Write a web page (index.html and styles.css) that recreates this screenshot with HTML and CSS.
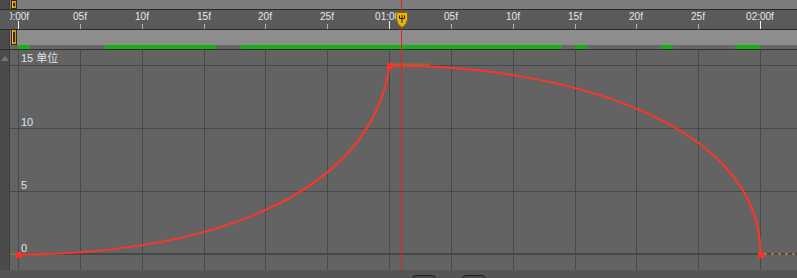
FILE: index.html
```html
<!DOCTYPE html>
<html lang="en">
<head>
    <meta charset="UTF-8">
    <title>Graph Editor</title>
    <link rel="stylesheet" href="styles.css">
</head>
<body>

<div class="panel">
    <div class="row nav">
        <div class="side"></div>
        <div class="main"><span class="handle small"></span></div>
    </div>

    <div class="row ruler">
        <div class="side"></div>
        <div class="main">
            <svg width="787" height="19">
                <g class="tick-labels">
                    <text x="8" y="10">0:00f</text>
                    <text x="70" y="10">05f</text>
                    <text x="132" y="10">10f</text>
                    <text x="194" y="10">15f</text>
                    <text x="255" y="10">20f</text>
                    <text x="317" y="10">25f</text>
                    <text x="379" y="10">01:00f</text>
                    <text x="441" y="10">05f</text>
                    <text x="503" y="10">10f</text>
                    <text x="565" y="10">15f</text>
                    <text x="626" y="10">20f</text>
                    <text x="688" y="10">25f</text>
                    <text x="750" y="10">02:00f</text>
                </g>
                <g class="minor">
                    <rect x="70" y="14" width="1" height="5"/>
                    <rect x="132" y="14" width="1" height="5"/>
                    <rect x="194" y="14" width="1" height="5"/>
                    <rect x="255" y="14" width="1" height="5"/>
                    <rect x="317" y="14" width="1" height="5"/>
                    <rect x="441" y="14" width="1" height="5"/>
                    <rect x="503" y="14" width="1" height="5"/>
                    <rect x="565" y="14" width="1" height="5"/>
                    <rect x="626" y="14" width="1" height="5"/>
                    <rect x="688" y="14" width="1" height="5"/>
                </g>
                <g class="major">
                    <rect x="8" y="11" width="1" height="8"/>
                    <rect x="379" y="11" width="1" height="8"/>
                    <rect x="750" y="11" width="1" height="8"/>
                </g>
            </svg>
        </div>
    </div>

    <div class="row work">
        <div class="side"></div>
        <div class="main"><span class="handle tall"></span></div>
    </div>

    <div class="row cache">
        <div class="side"></div>
        <div class="main">
            <svg width="787" height="4">
                <g class="green">
                    <rect x="8" y="0" width="12" height="4"/>
                    <rect x="95" y="0" width="111" height="4"/>
                    <rect x="231" y="0" width="321" height="4"/>
                    <rect x="565" y="0" width="12" height="4"/>
                    <rect x="651" y="0" width="12" height="4"/>
                    <rect x="725" y="0" width="25" height="4"/>
                </g>
            </svg>
        </div>
    </div>

    <div class="row graph">
        <div class="side">
            <svg width="9" height="14"><polygon class="tri" points="1,11 5,6 9,11"/></svg>
        </div>
        <div class="main">
            <svg width="787" height="220">
                <g class="grid">
                    <rect x="8" y="0" width="1" height="220"/>
                    <rect x="70" y="0" width="1" height="220"/>
                    <rect x="132" y="0" width="1" height="220"/>
                    <rect x="194" y="0" width="1" height="220"/>
                    <rect x="255" y="0" width="1" height="220"/>
                    <rect x="317" y="0" width="1" height="220"/>
                    <rect x="379" y="0" width="1" height="220"/>
                    <rect x="441" y="0" width="1" height="220"/>
                    <rect x="503" y="0" width="1" height="220"/>
                    <rect x="565" y="0" width="1" height="220"/>
                    <rect x="626" y="0" width="1" height="220"/>
                    <rect x="688" y="0" width="1" height="220"/>
                    <rect x="750" y="0" width="1" height="220"/>
                    <rect x="0" y="15" width="787" height="1"/>
                    <rect x="0" y="78" width="787" height="1"/>
                    <rect x="0" y="141" width="787" height="1"/>
                </g>
                <rect class="zero" x="0" y="203" width="787" height="2"/>

                <g class="value-labels">
                    <text x="11" y="12">15 单位</text>
                    <text x="11" y="76">10</text>
                    <text x="11" y="139">5</text>
                    <text x="11" y="202">0</text>
                </g>

                <path class="speed" d="M0,204 H6 M382,14.5 H420"/>
                <path class="after" d="M754,204 H787"/>
                <path class="curve" d="M8.5,204.5 C190,204.5 360,150 379.5,15.5 C550,15.5 750.5,70 750.5,204.5"/>

                <rect class="key" x="6" y="202" width="6" height="6"/>
                <rect class="key" x="377" y="13" width="6" height="6"/>
                <rect class="key" x="748" y="202" width="6" height="6"/>
            </svg>
        </div>
    </div>

    <div class="footer">
        <span class="btn"></span>
        <span class="btn"></span>
    </div>

    <div class="playhead"></div>
    <svg class="cti" width="12" height="16">
        <path class="cti-body" d="M0.5,0.5 H11.5 V7 Q11.5,12 6,15.5 Q0.5,12 0.5,7 Z"/>
        <path class="cti-mark" d="M6,5 V11 M3.5,3.5 V6.5 H8.5 V3.5 M6,3 V5"/>
    </svg>
</div>

</body>
</html>
```

FILE: styles.css
```css
body {
    margin: 0;
    background-color: #565656;
    font-family: "Liberation Sans", Arial, sans-serif;
}
.panel {
    position: relative;
    display: flex;
    flex-direction: column;
    width: 797px;
    height: 278px;
    overflow: hidden;
}
.row {
    display: flex;
}
.side {
    width: 9px;
    border-right: 1px solid #3c3c3c;
    background-color: #4b4b4b;
    flex-shrink: 0;
}
.main {
    flex: 1;
    position: relative;
    overflow: hidden;
}
.main svg {
    display: block;
}

/* nav bar */
.nav {
    height: 9px;
    border-bottom: 1px solid #2a2a2a;
}
.nav .main {
    background-color: #7d7d7d;
}

/* ruler */
.ruler {
    height: 19px;
    border-bottom: 1px solid #2a2a2a;
    background-color: #5a5a5a;
}
.ruler .side {
    background-color: #5a5a5a;
    border-right: none;
    width: 10px;
}
.tick-labels text {
    font-family: "Liberation Sans", Arial, sans-serif;
    font-size: 10px;
    fill: #e2e8f0;
    text-anchor: middle;
}
.minor rect {
    fill: #b4b4b4;
}
.major rect {
    fill: #f0f0f0;
}

/* work area */
.work {
    height: 15px;
}
.work .main {
    background-color: #8d8d8d;
}

.handle {
    position: absolute;
    left: 1px;
    width: 4px;
    border: 1px solid #3a2c00;
    background-color: #c9980e;
    box-shadow: inset 1px 0 0 #f0c040;
}
.handle.small {
    top: 0;
    height: 7px;
}
.handle.tall {
    top: -1px;
    height: 14px;
}
.handle::after {
    content: "";
    position: absolute;
    left: 1px;
    top: 2px;
    bottom: 2px;
    width: 2px;
    border-left: 1px solid #3a2c00;
    border-right: 1px solid #3a2c00;
    box-sizing: border-box;
}

/* cache bar */
.cache {
    height: 4px;
    border-bottom: 1px solid #2e2e2e;
}
.cache .main {
    background-color: #676767;
}
.green rect {
    fill: #17b117;
}

/* graph */
.graph {
    height: 220px;
}
.graph .main {
    background-color: #636363;
}
.graph .side svg {
    display: block;
}
.tri {
    fill: #767676;
}
.grid rect {
    fill: #494949;
}
.zero {
    fill: #474747;
}
.value-labels text {
    font-family: "Liberation Sans", "Noto Sans CJK SC", sans-serif;
    font-size: 11px;
    fill: #dde4ec;
}
.curve {
    fill: none;
    stroke: #ff3527;
    stroke-width: 2;
}
.speed {
    fill: none;
    stroke: #8c7038;
    stroke-width: 2;
}
.after {
    fill: none;
    stroke: #a07840;
    stroke-width: 2;
    stroke-dasharray: 3 4;
}
.key {
    fill: #ff2e2e;
}

/* footer */
.footer {
    display: flex;
    gap: 26px;
    height: 8px;
    padding-left: 412px;
    background-color: #555555;
}
.btn {
    width: 22px;
    height: 8px;
    margin-top: 5px;
    border: 1px solid #1e1e1e;
    border-radius: 4px;
    background-color: #4a4a4a;
}

/* current time indicator */
.playhead {
    position: absolute;
    left: 401px;
    top: 0;
    width: 1px;
    height: 270px;
    background-color: #e0221a;
}
.cti {
    position: absolute;
    left: 396px;
    top: 12px;
}
.cti-body {
    fill: #e8b410;
    stroke: #8a6800;
}
.cti-mark {
    fill: none;
    stroke: #2a2000;
    stroke-width: 1;
}
```
